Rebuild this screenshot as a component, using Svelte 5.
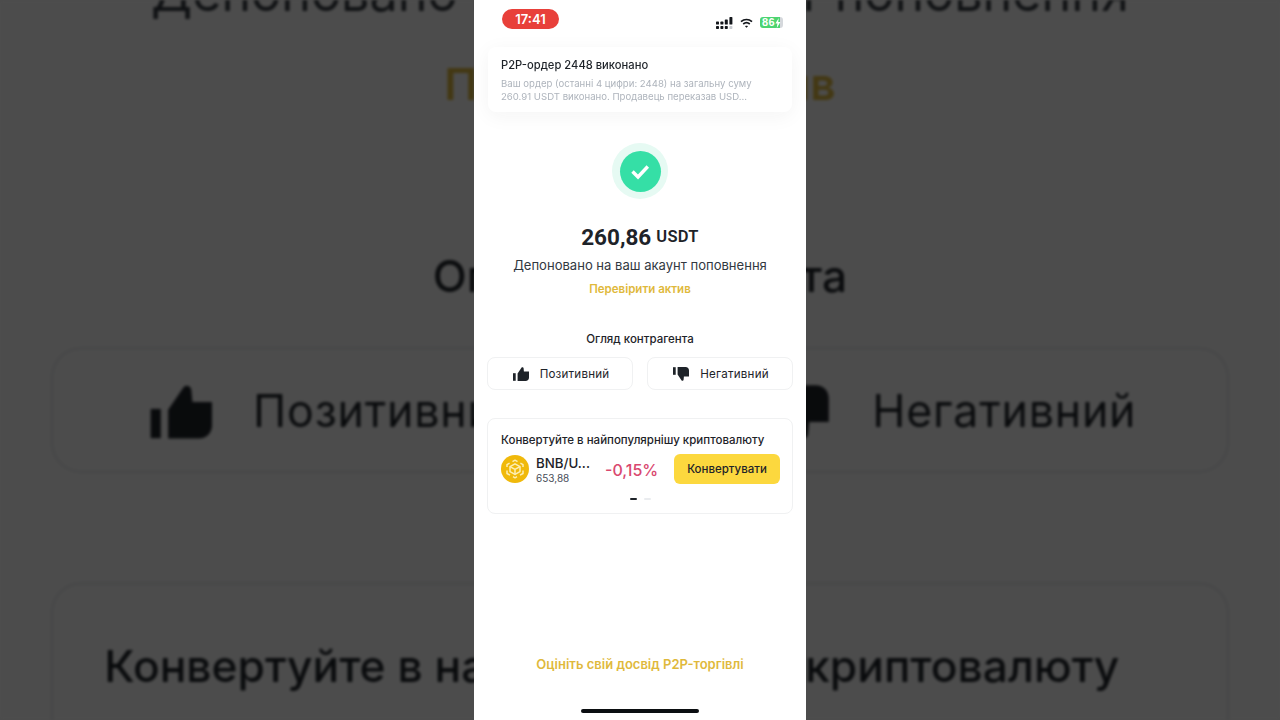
<script lang="ts">
	const font_note: string = 'Ваш ордер (останні 4 цифри: 2448) на загальну суму 260.91 USDT виконано. Продавець переказав USD...';
</script>

{#snippet screen()}
	<div class="status">
		<div class="time">17:41</div>
		<div class="status-icons">
			<svg width="17" height="12" viewBox="0 0 17 12" fill="#14171c">
				<rect x="0" y="4.6" width="3" height="3" rx=".7"/><rect x="0" y="9" width="3" height="3" rx=".7"/>
				<rect x="4.4" y="4.6" width="3" height="3" rx=".7"/><rect x="4.4" y="9" width="3" height="3" rx=".7"/>
				<rect x="8.8" y="2.4" width="3" height="5.2" rx=".7"/><rect x="8.8" y="9" width="3" height="3" rx=".7"/>
				<rect x="13.4" y="0" width="3" height="7.6" rx=".7"/><rect x="13.4" y="9" width="3" height="3" rx=".7" fill="#c9ccd1"/>
			</svg>
			<svg width="13" height="10" viewBox="0 0 13 10" fill="none" stroke="#14171c" stroke-width="1.7">
				<path d="M1 3.6c3.2-2.8 7.8-2.8 11 0"/>
				<path d="M3.2 6c2-1.6 4.6-1.6 6.6 0"/>
				<path d="M6.5 9.8 5 8.2c.9-.6 2.1-.6 3 0z" fill="#14171c" stroke="none"/>
			</svg>
			<div class="battery">
				<span class="level">86</span>
				<svg width="6" height="10" viewBox="0 0 6 10" fill="#fff"><path d="M3.8 0 .4 5.6h2L1.8 10l3.6-6H3.2z"/></svg>
			</div>
		</div>
	</div>

	<div class="notice">
		<div class="notice-title">P2P-ордер 2448 виконано</div>
		<div class="notice-text">{font_note}</div>
	</div>

	<div class="success">
		<div class="ring">
			<div class="disc">
				<svg width="24" height="24" viewBox="0 0 24 24" fill="none" stroke="#fff" stroke-width="3.4">
					<path d="M4.5 12.5 10 18 19.8 7.5"/>
				</svg>
			</div>
		</div>
	</div>

	<div class="amount"><span class="value">260,86</span><span class="unit">USDT</span></div>
	<div class="deposited">Депоновано на ваш акаунт поповнення</div>
	<div class="check-asset">Перевірити актив</div>

	<div class="review-title">Огляд контрагента</div>
	<div class="review">
		<div class="review-btn">
			<svg class="thumb" width="16" height="14" viewBox="0 0 16 14" fill="#1e2329">
				<rect x="0" y="6.2" width="2.7" height="7.6"/>
				<path d="M4.6 6.4 8.6.6c.3-.6 1.8-.7 2 .6l.3 3.2H16v6c0 2-1.4 3.5-3.4 3.5h-8z"/>
			</svg>
			<span>Позитивний</span>
		</div>
		<div class="review-btn">
			<svg class="thumb" width="16" height="14" viewBox="0 0 16 14" fill="#1e2329">
				<rect x="0" y="0.2" width="2.7" height="7.6"/>
				<path d="M4.6 7.6 8.6 13.4c.3.6 1.8.7 2-.6l.3-3.2H16v-6C16 1.6 14.6.1 12.6.1h-8z"/>
			</svg>
			<span>Негативний</span>
		</div>
	</div>

	<div class="convert">
		<div class="convert-title">Конвертуйте в найпопулярнішу криптовалюту</div>
		<div class="convert-row">
			<svg class="coin" width="28" height="28" viewBox="0 0 28 28" fill="none" stroke="#fdeeb5" stroke-width="1.5" stroke-linejoin="round">
				<circle cx="14" cy="14" r="14" fill="#f0b90b" stroke="none"/>
				<path d="M11.5 6.6 14 5.2l2.5 1.4M6 12V9.6l2.6-1.5M19.4 8.1 22 9.6V12M6 15.5v3l3 1.7M22 15.5v3l-3 1.7M12 21.7l2 1.1 2-1.1"/>
				<path d="M14 8.8 19 11.6v5L14 19.4l-5-2.8v-5z"/>
				<path d="M9 11.6 14 14.4l5-2.8M14 14.4v5"/>
			</svg>
			<div class="pair">
				<div class="pair-name">BNB/U...</div>
				<div class="pair-price">653,88</div>
			</div>
			<div class="change">-0,15%</div>
			<div class="convert-btn">Конвертувати</div>
		</div>
		<div class="dots"><span class="dot active"></span><span class="dot"></span></div>
	</div>

	<div class="rate">Оцініть свій досвід P2P-торгівлі</div>
	<div class="home"></div>
{/snippet}

<div class="stage">
	<div class="backdrop" aria-hidden="true">
		<div class="phone zoomed">{@render screen()}</div>
	</div>
	<div class="phone">{@render screen()}</div>
</div>

<style>
	:global(body) {
		background-color: #4d4d4d;
		margin: 0px;
	}

	* {
		box-sizing: border-box;
	}

	.stage {
		display: flex;
		font-family: Inter, "Noto Sans", sans-serif;
		height: 720px;
		justify-content: center;
		overflow: hidden;
		position: relative;
		width: 1280px;
	}

	.backdrop {
		display: flex;
		filter: blur(1.6px) brightness(0.3);
		inset: 0px;
		justify-content: center;
		overflow: hidden;
		position: absolute;
	}

	.phone {
		background-color: #fff;
		color: #1e2329;
		display: flex;
		flex-direction: column;
		flex-shrink: 0;
		height: 720px;
		position: relative;
		width: 332px;
	}

	.zoomed {
		transform: translateY(-2px) scale(3.855);
		transform-origin: 50% 50%;
	}

	.status {
		align-items: center;
		display: flex;
		height: 47px;
		justify-content: space-between;
		padding: 0px 23px 9px 28px;
	}

	.time {
		background-color: #e8403a;
		border-radius: 10px;
		color: #fff;
		font-size: 13px;
		font-weight: 600;
		height: 20px;
		line-height: 20px;
		margin-top: -1px;
		text-align: center;
		width: 57px;
	}

	.status-icons {
		align-items: center;
		display: flex;
		gap: 7px;
		margin-top: 7px;
	}

	.battery {
		align-items: center;
		background: linear-gradient(90deg, #4cd471 86%, #d5d8dc 86%);
		border-radius: 3px;
		color: #fff;
		display: flex;
		font-family: "Liberation Sans", sans-serif;
		font-size: 11px;
		font-weight: 700;
		height: 11px;
		letter-spacing: 0.5px;
		line-height: 11px;
		padding-left: 2px;
		width: 23px;
	}

	.notice {
		border-radius: 8px;
		box-shadow: 0px 4px 20px rgba(30, 35, 41, 0.05);
		height: 65px;
		margin: 0px 14px;
		padding: 11px 13px;
	}

	.notice-title {
		font-size: 11.2px;
		font-weight: 500;
		line-height: 15px;
	}

	.notice-text {
		color: #aeb4bc;
		font-size: 9.6px;
		line-height: 13px;
		margin-top: 4px;
		width: 270px;
	}

	.success {
		display: flex;
		justify-content: center;
		margin-top: 31px;
	}

	.ring {
		align-items: center;
		background-color: #e6faf3;
		border-radius: 50%;
		display: flex;
		height: 56px;
		justify-content: center;
		width: 56px;
	}

	.disc {
		align-items: center;
		background-color: #35dfa6;
		border-radius: 50%;
		display: flex;
		height: 41px;
		justify-content: center;
		width: 41px;
	}

	.amount {
		align-items: center;
		display: flex;
		font-weight: 700;
		gap: 5px;
		justify-content: center;
		line-height: 30px;
		margin-top: 23px;
	}

	.value {
		font-family: Roboto, sans-serif;
		font-size: 22.5px;
	}

	.unit {
		font-family: Roboto, sans-serif;
		font-size: 16.5px;
		font-weight: 600;
		letter-spacing: 0.3px;
	}

	.deposited {
		color: #32383f;
		font-size: 13.05px;
		line-height: 18px;
		margin-top: 4px;
		text-align: center;
	}

	.check-asset {
		color: #dfb93c;
		font-size: 11.5px;
		font-weight: 600;
		line-height: 16px;
		margin-top: 7px;
		text-align: center;
	}

	.review-title {
		font-size: 11.5px;
		font-weight: 450;
		line-height: 16px;
		margin-top: 34px;
		text-align: center;
	}

	.review {
		display: flex;
		gap: 14px;
		margin-top: 10px;
		padding: 0px 13px;
	}

	.review-btn {
		align-items: center;
		border: 1px solid #f0f1f2;
		border-radius: 8px;
		display: flex;
		flex: 1;
		font-size: 11.6px;
		font-weight: 400;
		gap: 11px;
		height: 33px;
		justify-content: center;
		letter-spacing: 0.2px;
		padding-left: 2px;
	}

	.convert {
		border: 1px solid #f0f1f2;
		border-radius: 8px;
		height: 96px;
		margin: 28px 13px 0px;
		padding: 13px 10px 0px 13px;
	}

	.convert-title {
		font-size: 11.5px;
		font-weight: 450;
		line-height: 16px;
	}

	.convert-row {
		align-items: center;
		display: flex;
		margin-top: 5px;
	}

	.coin {
		flex-shrink: 0;
	}

	.pair {
		flex-shrink: 0;
		margin-left: 7px;
		padding-top: 2px;
		width: 69px;
	}

	.pair-name {
		font-size: 13.3px;
		font-weight: 450;
		line-height: 17px;
	}

	.pair-price {
		color: #474d57;
		font-size: 10px;
		line-height: 13px;
	}

	.change {
		color: #d9486f;
		flex-shrink: 0;
		font-size: 16px;
		font-weight: 500;
		line-height: 30px;
		padding-top: 1px;
		width: 69px;
	}

	.convert-btn {
		background-color: #fcd83e;
		border-radius: 6px;
		flex-shrink: 0;
		font-size: 11.5px;
		font-weight: 450;
		height: 30px;
		line-height: 30px;
		text-align: center;
		width: 106px;
	}

	.dots {
		display: flex;
		gap: 7px;
		justify-content: center;
		margin-top: 13px;
		padding-right: 3px;
	}

	.dot {
		background-color: #eaecef;
		border-radius: 1px;
		height: 2px;
		width: 7px;
	}

	.dot.active {
		background-color: #1e2329;
	}

	.rate {
		color: #dfb93c;
		font-size: 13px;
		font-weight: 600;
		line-height: 18px;
		margin-top: auto;
		text-align: center;
	}

	.home {
		background-color: #0b0e11;
		border-radius: 2px;
		flex-shrink: 0;
		height: 4px;
		margin: 36px auto 7px;
		width: 118px;
	}
</style>
